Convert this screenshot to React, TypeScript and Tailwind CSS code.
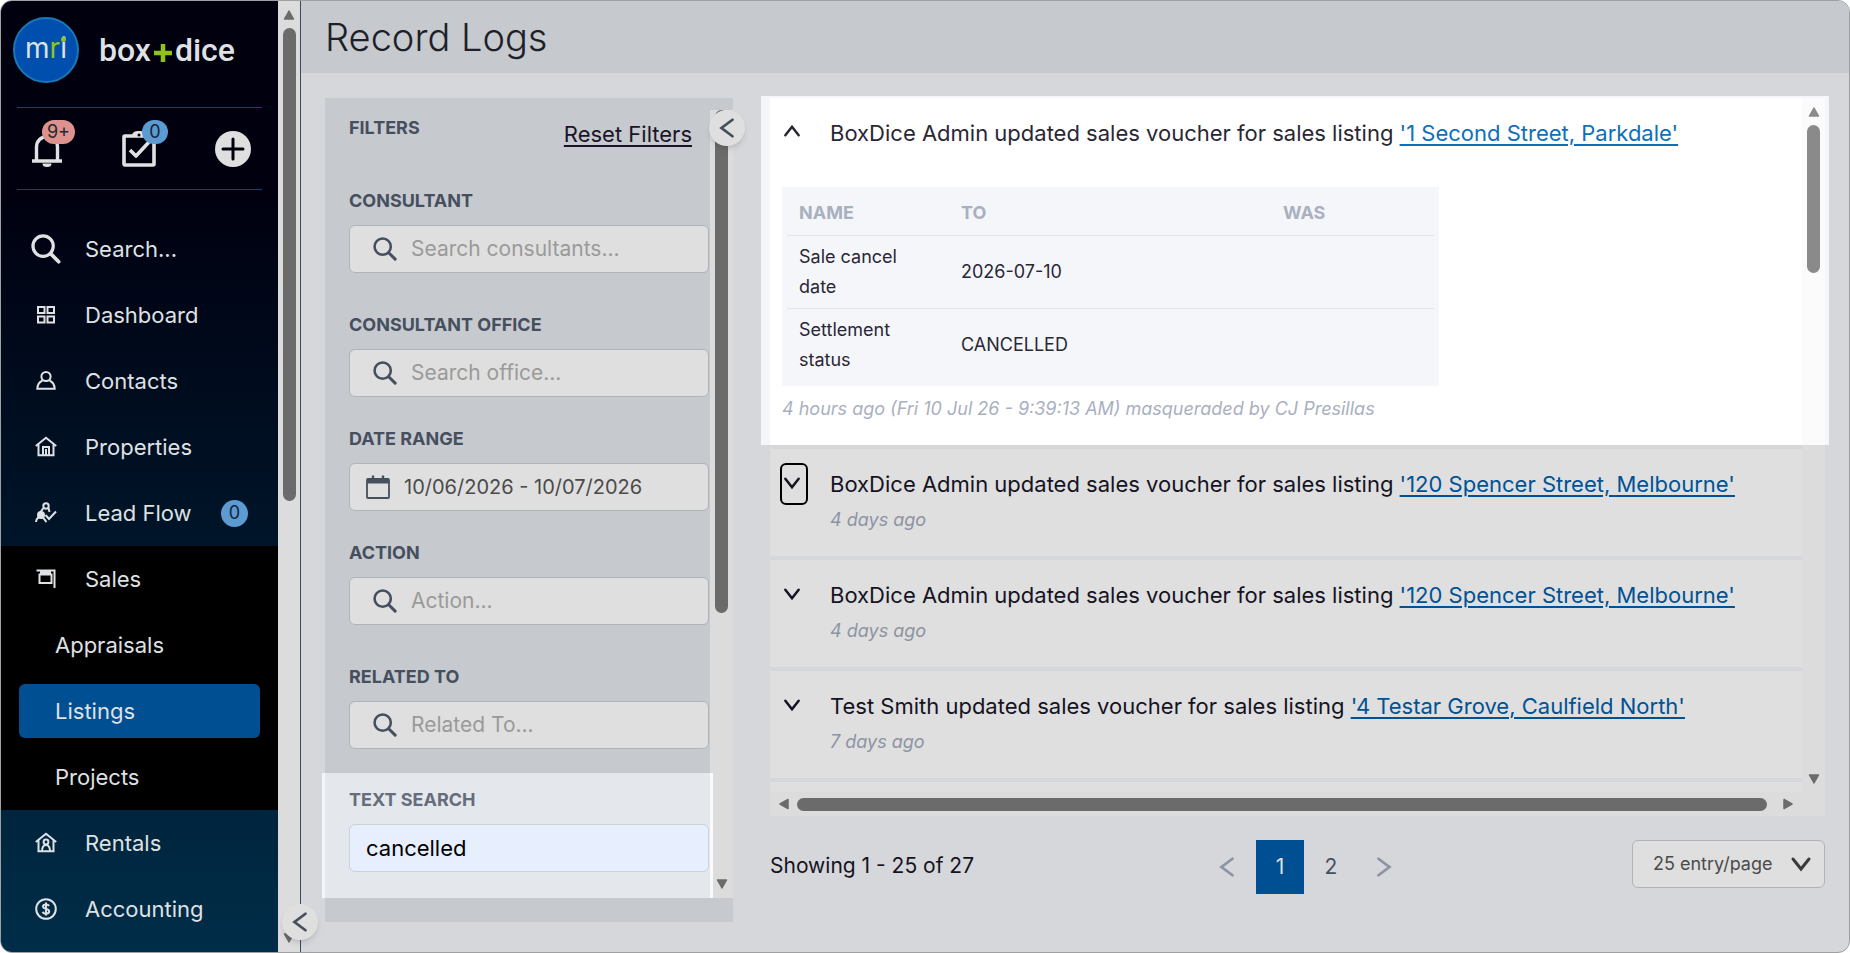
import { useState } from 'react';
import type { ReactNode } from 'react';

const logs = [
  { id: 2, text: 'BoxDice Admin updated sales voucher for sales listing', listing: "'120 Spencer Street, Melbourne'", time: '4 days ago' },
  { id: 3, text: 'BoxDice Admin updated sales voucher for sales listing', listing: "'120 Spencer Street, Melbourne'", time: '4 days ago' },
  { id: 4, text: 'Test Smith updated sales voucher for sales listing', listing: "'4 Testar Grove, Caulfield North'", time: '7 days ago' },
];

const changes = [
  { name: 'Sale cancel date', to: '2026-07-10', was: '' },
  { name: 'Settlement status', to: 'CANCELLED', was: '' },
];

const filters = [
  { id: 'consultant', label: 'CONSULTANT', placeholder: 'Search consultants...', space: 'mb-10' },
  { id: 'office', label: 'CONSULTANT OFFICE', placeholder: 'Search office...', space: 'mb-[30px]' },
  { id: 'date', label: 'DATE RANGE', value: '10/06/2026 - 10/07/2026', space: 'mb-[30px]' },
  { id: 'action', label: 'ACTION', placeholder: 'Action...', space: 'mb-10' },
  { id: 'related', label: 'RELATED TO', placeholder: 'Related To...', space: 'mb-6' },
];

function Chevron({ d, className }: { d: 'left' | 'right' | 'up' | 'down'; className: string }) {
  const points = {
    left: '18,3 6,12 18,21',
    right: '7,3 19,12 7,21',
    up: '4,17 12,7 20,17',
    down: '4,7 12,17 20,7',
  };
  return (
    <svg viewBox="0 0 24 24" className={className} fill="none" stroke="currentColor" strokeWidth="3" strokeLinecap="round">
      <polyline points={points[d]} />
    </svg>
  );
}

function Arrow({ d }: { d: 'left' | 'right' | 'up' | 'down' }) {
  const points = {
    left: '10,1.5 10,10.5 2,6',
    right: '2,1.5 2,10.5 10,6',
    up: '1.5,10 10.5,10 6,2',
    down: '1.5,2 10.5,2 6,10',
  };
  return (
    <svg viewBox="0 0 12 12" className="size-3 shrink-0" fill="currentColor" stroke="currentColor" strokeWidth="1.5" strokeLinejoin="round">
      <polygon points={points[d]} />
    </svg>
  );
}

function SearchIcon({ className }: { className: string }) {
  return (
    <svg viewBox="0 0 26 26" className={className} fill="none" stroke="currentColor" strokeWidth="2.8" strokeLinecap="round">
      <circle cx="10.5" cy="10.5" r="8.8" />
      <path d="M17 17l7 7" strokeWidth="3.2" />
    </svg>
  );
}

function CalendarIcon() {
  return (
    <svg viewBox="0 0 24 24" className="size-6 shrink-0 text-[#464f5e]" fill="none" stroke="currentColor" strokeWidth="1.8">
      <rect x="1" y="4" width="22" height="19" rx="1" />
      <path d="M1 3.5h22v5H1z" fill="currentColor" stroke="none" />
      <path d="M7 0.5v4M17 0.5v4" strokeWidth="2.4" />
    </svg>
  );
}

function MenuIcon({ children }: { children: ReactNode }) {
  return (
    <svg viewBox="0 0 22 22" className="size-[22px]" fill="none" stroke="currentColor" strokeWidth="2">
      {children}
    </svg>
  );
}

const houseIcon = <path d="M.8 10L11 1.8 21.2 10M3.5 8v11.2h15V8" />;

function MenuRow({ icon, children }: { icon: ReactNode; children: ReactNode }) {
  return (
    <a href="#" className="flex h-[66px] items-center pl-[27px]">
      <span className="mr-[21px] flex w-9 justify-center">{icon}</span>
      {children}
    </a>
  );
}

function Sidebar() {
  return (
    <aside className="relative z-20 flex shrink-0 border-r border-[#3d4a5e] text-[22px] text-[#dfe1e3]">
      <div className="flex w-[277px] flex-col bg-linear-to-b/srgb from-[#00000f] from-20% to-[#002d48]">
        <div className="flex items-center gap-5 pt-4 pl-3">
          <div className="flex size-[66px] items-center justify-center rounded-full border-2 border-[#1878b8] bg-[#004fae] pb-1 text-[28px] leading-none">
            <span>m</span>
            <span className="text-[#8fc31a]">r</span>
            <span className="relative">
              i
              <span className="absolute top-[3px] left-px size-[5px] rounded-full bg-[#8fc31a]" />
            </span>
          </div>
          <div className="flex items-center font-['Roboto',sans-serif] text-[32px] leading-10 font-medium">
            box
            <span className="flex text-[#8fc31a]">
              <svg viewBox="0 0 24 24" className="mt-1.5 size-6" role="img" aria-label="+">
                <path d="M12 3v18M3 12h18" stroke="currentColor" strokeWidth="4.500" />
              </svg>
            </span>
            dice
          </div>
        </div>

        <div className="mx-4 mt-6 flex h-[83px] items-end justify-between border-y border-[#00488c] pr-[11px] pb-[22px] pl-3.5">
          <button aria-label="Notifications" className="relative">
            <svg viewBox="0 0 32 34" className="h-[34px] w-8" fill="none" stroke="currentColor" strokeWidth="3.4">
              <path d="M1 28h30M5.500 28V14a10.500 10.500 0 0 1 21 0v14" />
              <path d="M11.500 30.500h9a4.500 3.500 0 0 1-9 0z" fill="currentColor" stroke="none" />
            </svg>
            <span className="absolute -top-[13px] left-[11px] flex h-6 w-[33px] items-center justify-center rounded-full bg-[#dd928d] text-lg text-[#23282f]">9+</span>
          </button>
          <button aria-label="Tasks" className="relative">
            <svg viewBox="0 0 34 37" className="h-[37px] w-[34px]" fill="none" stroke="currentColor" strokeWidth="3.6" strokeLinejoin="round">
              <rect x="2" y="6" width="30" height="29" rx="1" />
              <path d="M8 20l6 6 13-14" />
              <path d="M10 6c0-4 3-5 7-5s7 1 7 5z" fill="currentColor" stroke="none" />
              <circle cx="17" cy="5" r="1.500" fill="#00000f" stroke="none" />
            </svg>
            <span className="absolute -top-2.5 left-5 flex h-6 w-[26px] items-center justify-center rounded-full bg-[#5b9bd2] text-lg text-[#17243a]">0</span>
          </button>
          <button aria-label="Add">
            <svg viewBox="0 0 36 36" className="size-9">
              <circle cx="18" cy="18" r="18" fill="#dfdfdf" />
              <path d="M18 8v20M8 18h20" stroke="#00000f" strokeWidth="3" strokeLinecap="round" />
            </svg>
          </button>
        </div>

        <nav className="mt-[26px]">
          <MenuRow icon={<SearchIcon className="size-[30px]" />}>Search...</MenuRow>
          <MenuRow
            icon={
              <MenuIcon>
                <path d="M3 3h6.500v6H3zM12.500 3H19v6h-6.500zM3 12.500h6.500v6H3zM12.500 12.500H19v6h-6.500z" />
              </MenuIcon>
            }
          >
            Dashboard
          </MenuRow>
          <MenuRow
            icon={
              <MenuIcon>
                <circle cx="11" cy="6.500" r="4.600" />
                <path d="M7.500 10.500C4 12 2.500 15 2.300 18.800h17.400C19.500 15 18 12 14.500 10.500" />
              </MenuIcon>
            }
          >
            Contacts
          </MenuRow>
          <MenuRow
            icon={
              <MenuIcon>
                {houseIcon}
                <path d="M8 19v-8h6v8M11 13v6" />
              </MenuIcon>
            }
          >
            Properties
          </MenuRow>
          <MenuRow
            icon={
              <MenuIcon>
                <circle cx="11" cy="4" r="2.700" />
                <circle cx="6" cy="13" r="3" fill="currentColor" />
                <path d="M1 20c.3-3 2-5 5-5s3.500 3 5.500 5M8.500 6L5.500 10M13.500 6l1 4M10.500 13l3.500 4 7-7.500" />
              </MenuIcon>
            }
          >
            Lead Flow
            <span className="ml-auto mr-[30px] flex size-[27px] items-center justify-center rounded-full bg-[#5b9bd2] text-lg text-[#17243a]">0</span>
          </MenuRow>

          <div className="bg-black">
            <MenuRow
              icon={
                <MenuIcon>
                  <path d="M1.500 2.500h18V20M4.500 6.500h12v8.500h-12z" />
                  <path d="M5 3h11v4H5z" fill="currentColor" stroke="none" />
                </MenuIcon>
              }
            >
              Sales
            </MenuRow>
            <a href="#" className="flex h-[66px] items-center pl-[54px]">Appraisals</a>
            <div className="px-[18px] py-1.5">
              <a href="#" className="flex h-[54px] items-center rounded-md bg-[#004f93] pl-9">Listings</a>
            </div>
            <a href="#" className="flex h-[66px] items-center pl-[54px]">Projects</a>
          </div>

          <MenuRow
            icon={
              <MenuIcon>
                {houseIcon}
                <circle cx="11" cy="10" r="2.400" />
                <path d="M7 19.500c0-4 1.500-6.500 4-6.500s4 2.500 4 6.500" />
              </MenuIcon>
            }
          >
            Rentals
          </MenuRow>
          <MenuRow
            icon={
              <MenuIcon>
                <circle cx="11" cy="11" r="9.800" />
                <path d="M14 8c-.5-1.200-1.500-1.600-3-1.600-1.800 0-3 .8-3 2.200 0 3.200 6.200 1.400 6.200 4.600 0 1.600-1.400 2.400-3.200 2.400-1.700 0-2.800-.6-3.200-1.900M11 4.500v13" />
              </MenuIcon>
            }
          >
            Accounting
          </MenuRow>
        </nav>
      </div>

      <div className="flex w-[22px] flex-col items-center bg-[#dcdcdc] pt-2 text-[#6b6b6b]">
        <Arrow d="up" />
        <div className="mt-[7px] h-[473px] w-[13px] rounded-full bg-[#6b6b6b]" />
        <div className="mt-auto mb-2">
          <Arrow d="down" />
        </div>
      </div>
      <button
        aria-label="Collapse menu"
        className="absolute -right-[18px] bottom-3 flex size-9 items-center justify-center rounded-full bg-[#dfdfdf] text-[#464f5e] shadow-md"
      >
        <Chevron d="left" className="size-[22px]" />
      </button>
    </aside>
  );
}

function Filters() {
  const [text, setText] = useState('cancelled');

  return (
    <section className="relative z-10 mb-[30px] flex w-[408px] shrink-0 bg-[#c6c9ce] pt-3 pb-6">
      <div className="flex flex-1 flex-col">
        <div className="mb-[43px] flex items-start justify-between pt-1.5 pr-[18px] pl-6">
          <h2 className="text-lg leading-6 font-bold text-[#464f5e]">FILTERS</h2>
          <a href="#" className="mt-1.5 text-[22px] leading-6 text-[#1b1428] underline decoration-2 underline-offset-3">Reset Filters</a>
        </div>

        {filters.map((f) => (
          <div key={f.id} className={`pr-px pl-6 ${f.space}`}>
            <label htmlFor={f.id} className="mb-3 block text-lg leading-6 font-bold text-[#464f5e]">{f.label}</label>
            <div className={`flex h-12 items-center rounded-md border border-[#afb4ba] bg-[#dfdfdf] ${f.value ? 'gap-3.5 pl-4' : 'gap-3.5 pl-[23px]'}`}>
              {f.value ? <CalendarIcon /> : <SearchIcon className="size-6 shrink-0 text-[#464f5e]" />}
              <input
                id={f.id}
                type="text"
                defaultValue={f.value}
                placeholder={f.placeholder}
                className={`w-full min-w-0 bg-transparent text-[#4b4b4b] outline-none placeholder:text-[#9a9a9a] ${f.value ? 'text-xl' : 'text-[21px]'}`}
              />
            </div>
          </div>
        ))}

        {/* Highlighted field */}
        <div className="-mx-[3px] flex-1 border-r-[3px] border-l-[3px] border-r-[#fbfbfb] border-l-[#f5f6fa] bg-[#e4e7ec] pt-[15px] pr-px pl-6">
          <label htmlFor="text-search" className="mb-3 block text-lg leading-6 font-bold text-[#656d7c]">TEXT SEARCH</label>
          <input
            id="text-search"
            type="text"
            value={text}
            onChange={(e) => setText(e.target.value)}
            className="h-12 w-full rounded-md border border-[#cdd2d9] bg-[#e7eefe] px-4 text-[22px] text-black outline-none"
          />
        </div>
      </div>

      <div className="-z-10 flex w-[23px] flex-col items-center bg-[#dcdcdc] text-[#6b6b6b]">
        <div className="h-[503px] w-[13px] rounded-full bg-[#6b6b6b]" />
        <div className="mt-auto mb-2">
          <Arrow d="down" />
        </div>
      </div>
      <button
        aria-label="Collapse filters"
        className="absolute top-3 -right-3 flex size-9 items-center justify-center rounded-full bg-[#dfdfdf] text-[#464f5e] shadow-md"
      >
        <Chevron d="left" className="size-[22px]" />
      </button>
    </section>
  );
}

function OpenLog() {
  return (
    <article className="h-[347px] shrink-0 bg-white pt-[19px] pl-3">
      <div className="flex items-center text-[22px] leading-8 text-[#2a2735]">
        <button aria-label="Collapse entry" className="mr-[26px] -ml-0.5 flex w-6 justify-center">
          <Chevron d="up" className="mb-1 size-5" />
        </button>
        <p className="whitespace-nowrap">
          BoxDice Admin updated sales voucher for sales listing{' '}
          <a href="#" className="text-[#0d70b8] underline decoration-2 underline-offset-3">'1 Second Street, Parkdale'</a>
        </p>
      </div>
      <div className="mt-[38px] h-[199px] w-[657px] bg-[#f5f6fa] px-[5px]">
        <table className="w-full table-fixed text-left text-lg text-[#2a2735]">
          <thead>
            <tr className="h-12 border-b border-[#e2e4ea] text-[#a9b0c0]">
              <th className="w-[162px] pt-1 pl-3 font-bold">NAME</th>
              <th className="w-[322px] pt-1 pl-3 font-bold">TO</th>
              <th className="pt-1 pl-3 font-bold">WAS</th>
            </tr>
          </thead>
          <tbody>
            {changes.map((c) => (
              <tr key={c.name} className="h-[73px] border-b border-[#e2e4ea] leading-[30px] last:border-b-0">
                <td className="pr-12 pl-3">{c.name}</td>
                <td className="pl-3">{c.to}</td>
                <td className="pl-3">{c.was}</td>
              </tr>
            ))}
          </tbody>
        </table>
      </div>
      <p className="mt-[11px] text-lg leading-6 text-[#a9b0c0] italic">4 hours ago (Fri 10 Jul 26 - 9:39:13 AM) masqueraded by CJ Presillas</p>
    </article>
  );
}

export default function App() {
  const [focused] = useState(2);

  return (
    <div className="flex h-screen overflow-hidden rounded-xl border border-[#9fa0a2] bg-[#d6d7db] font-['Inter',sans-serif]">
      <Sidebar />

      <div className="flex min-w-0 flex-1 flex-col">
        <header className="flex h-[72px] shrink-0 items-center bg-[#c6c9ce] pl-6">
          <h1 className="text-[38px] font-light text-[#1d2127]">Record Logs</h1>
        </header>

        <main className="flex min-h-0 flex-1 gap-[37px] pt-[25px] pr-6 pl-6">
          <Filters />

          <section className="flex min-w-0 flex-1 flex-col pb-[58px]">
            <div className="relative isolate flex min-h-0 flex-1">
              {/* Light frame round the open entry */}
              <div className="absolute -top-0.5 -right-1 -left-[9px] -z-10 h-[349px] bg-[#f5f6fa]" />

              <div className="flex min-w-0 flex-1 flex-col gap-1">
                <OpenLog />
                {logs.map((log) => (
                  <article key={log.id} className="h-[107px] shrink-0 bg-[#dfdfdf] pt-[19px] pl-2.5">
                    <div className="flex text-[22px] leading-8 text-[#15131f]">
                      <button
                        aria-label="Expand entry"
                        className={
                          log.id === focused
                            ? '-mt-[5px] -mb-[5px] mr-[22px] flex h-[42px] w-7 justify-center rounded-md border-2 border-black pt-2'
                            : 'mr-[22px] flex w-7 justify-center pt-[5px]'
                        }
                      >
                        <Chevron d="down" className="mr-1 size-5 shrink-0" />
                      </button>
                      <p className="whitespace-nowrap">
                        {log.text}{' '}
                        <a href="#" className="text-[#005295] underline decoration-2 underline-offset-3">{log.listing}</a>
                      </p>
                    </div>
                    <p className="mt-2 pl-[50px] text-lg leading-6 text-[#8c94a3] italic">{log.time}</p>
                  </article>
                ))}
                <div className="flex min-h-0 flex-1 flex-col justify-end bg-[#dfdfdf]">
                  <div className="flex h-6 items-center bg-[#dcdcdc] px-2 text-[#6b6b6b]">
                    <Arrow d="left" />
                    <div className="mr-[15px] ml-[7px] h-[13px] flex-1 rounded-full bg-[#6b6b6b]" />
                    <Arrow d="right" />
                  </div>
                </div>
              </div>

              <div className="flex w-[23px] flex-col items-center bg-[#dcdcdc] text-[#6b6b6b]">
                <div className="flex h-[347px] w-full flex-col items-center bg-[#fbfbfb] pt-2 text-[#8a8a8a]">
                  <Arrow d="up" />
                  <div className="mt-[7px] h-[148px] w-[13px] rounded-full bg-[#8a8a8a]" />
                </div>
                <div className="mt-auto mb-[31px]">
                  <Arrow d="down" />
                </div>
              </div>
            </div>

            <footer className="mt-6 flex h-[54px] shrink-0 items-start justify-between text-[21px]">
              <p className="pt-2.5 leading-8 text-[#15131f]">Showing 1 - 25 of 27</p>
              <nav className="flex h-[54px] text-[#464f5e]">
                <button aria-label="Previous page" className="flex w-[58px] items-center justify-center text-[#8c94a3]">
                  <Chevron d="left" className="size-[22px]" />
                </button>
                <button className="w-12 bg-[#004f93] text-[#dfdfdf]">1</button>
                <button className="w-[54px]">2</button>
                <button aria-label="Next page" className="flex w-[50px] items-center justify-center text-[#8c94a3]">
                  <Chevron d="right" className="size-[22px]" />
                </button>
              </nav>
              <div className="relative">
                <select aria-label="Entries per page" className="h-12 w-[193px] appearance-none rounded-md border border-[#afb4ba] bg-[#dfdfdf] pl-5 text-lg text-[#4b4b4b]">
                  <option>25 entry/page</option>
                  <option>50 entry/page</option>
                </select>
                <Chevron d="down" className="pointer-events-none absolute top-3 right-3 size-6 text-[#3b3b3b]" />
              </div>
            </footer>
          </section>
        </main>
      </div>
    </div>
  );
}
